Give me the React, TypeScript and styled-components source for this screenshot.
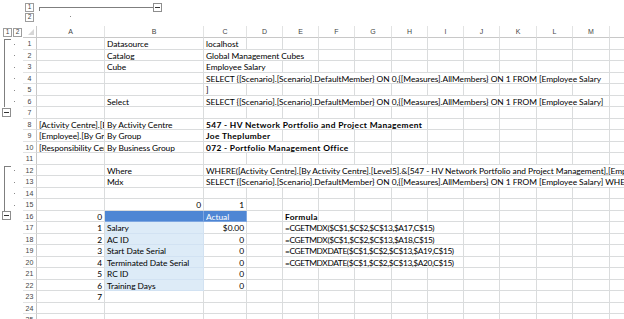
import React from "react";
import styled, { createGlobalStyle } from "styled-components";

const GlobalStyle = createGlobalStyle`
  html, body {
    margin: 0;
    padding: 0;
    background: #ffffff;
    overflow: hidden;
  }
  body {
    font-family: Lato, "Liberation Sans", sans-serif;
  }
`;

const COL_WIDTHS = [68, 99, 43, 36, 36, 36, 37, 36, 36, 36, 37, 36, 37, 40];
const LETTERS = "ABCDEFGHIJKLMN".split("");
const TEMPLATE = `23px 14px ${COL_WIDTHS.map((w) => `${w}px`).join(" ")}`;

const GRID = "#dadcdd";
const LINE = "#7f7f7f";

type Fill = "none" | "head" | "band";

type CellDef = {
  col: number;
  text?: string;
  span?: number;
  right?: boolean;
  bold?: boolean;
  tight?: boolean;
  fill?: Fill;
};

type Outline = "none" | "start" | "mid" | "minus";

const SELECT =
  "SELECT {[Scenario].[Scenario].DefaultMember} ON 0,{[Measures].AllMembers} ON 1 FROM [Employee Salary]";

const DATA: Record<number, CellDef[]> = {
  1: [
    { col: 1, text: "Datasource" },
    { col: 2, text: "localhost" },
  ],
  2: [
    { col: 1, text: "Catalog" },
    { col: 2, text: "Global Management Cubes", span: 3 },
  ],
  3: [
    { col: 1, text: "Cube" },
    { col: 2, text: "Employee Salary", span: 2 },
  ],
  4: [{ col: 2, text: SELECT.slice(0, -1), span: 11 }],
  5: [{ col: 2, text: "]" }],
  6: [
    { col: 1, text: "Select" },
    { col: 2, text: SELECT, span: 11 },
  ],
  8: [
    { col: 0, text: "[Activity Centre].[By Activity Centre].[Level5]" },
    { col: 1, text: "By Activity Centre" },
    { col: 2, text: "547 - HV Network Portfolio and Project Management", span: 6, bold: true },
  ],
  9: [
    { col: 0, text: "[Employee].[By Group]" },
    { col: 1, text: "By Group" },
    { col: 2, text: "Joe Theplumber", span: 2, bold: true },
  ],
  10: [
    { col: 0, text: "[Responsibility Centre].[By Business Group]" },
    { col: 1, text: "By Business Group" },
    { col: 2, text: "072 - Portfolio Management Office", span: 4, bold: true },
  ],
  12: [
    { col: 1, text: "Where" },
    {
      col: 2,
      text: "WHERE([Activity Centre].[By Activity Centre].[Level5].&[547 - HV Network Portfolio and Project Management],[Employee].[By Group].&[Joe Theplumber])",
      span: 12,
    },
  ],
  13: [
    { col: 1, text: "Mdx" },
    {
      col: 2,
      text: `${SELECT} WHERE([Activity Centre].[By Activity Centre].[Level5].&[547 - HV Network Portfolio and Project Management])`,
      span: 12,
    },
  ],
  15: [
    { col: 1, text: "0", right: true },
    { col: 2, text: "1", right: true },
  ],
  16: [
    { col: 0, text: "0", right: true },
    { col: 1, fill: "head" },
    { col: 2, text: "Actual", fill: "head" },
    { col: 4, text: "Formula", bold: true },
  ],
};

const MEASURES = ["Salary", "AC ID", "Start Date Serial", "Terminated Date Serial", "RC ID", "Training Days"];

MEASURES.forEach((name, i) => {
  const row = 17 + i;
  const cells: CellDef[] = [
    { col: 0, text: String(i + 1), right: true },
    { col: 1, text: name, fill: "band" },
    { col: 2, text: i === 0 ? "$0.00" : "0", right: true },
  ];
  if (i < 4) {
    const fn = i < 2 ? "CGETMDX" : "CGETMDXDATE";
    cells.push({
      col: 4,
      text: `=${fn}($C$1,$C$2,$C$13,$A${row},C$15)`,
      span: 5,
      tight: true,
    });
  }
  DATA[row] = cells;
});
DATA[23] = [{ col: 0, text: "7", right: true }];

const outlineFor = (row: number): Outline => {
  if (row === 1 || row === 12) return "start";
  if ((row > 1 && row <= 6) || (row > 12 && row <= 15)) return "mid";
  if (row === 7 || row === 16) return "minus";
  return "none";
};

const Sheet = styled.div`
  display: flex;
  flex-direction: column;
  width: 660px;
`;

const Band = styled.div<{ $h: number }>`
  display: grid;
  grid-template-columns: ${TEMPLATE};
  height: ${(p) => p.$h}px;
`;

/* ---- outline controls ---- */

const LevelButton = styled.span`
  display: flex;
  align-items: center;
  justify-content: center;
  width: 9px;
  height: 9px;
  box-sizing: border-box;
  border: 1px solid #9d9d9d;
  background: #fff;
  color: #444;
  font-family: "Liberation Sans", sans-serif;
  font-size: 6.5px;
  line-height: 1;
`;

const MinusBox = styled.span`
  display: flex;
  align-items: center;
  justify-content: center;
  width: 9px;
  height: 9px;
  box-sizing: border-box;
  border: 1px solid #8e8e8e;
  background: #fff;

  &::after {
    content: "";
    width: 5px;
    height: 1px;
    background: #333;
  }
`;

const ColLevels = styled.div`
  grid-column: 2;
  display: flex;
  flex-direction: column;
  gap: 1px;
  padding: 3px 0 0 2px;
`;

const ColGroup = styled.div`
  grid-column: 3 / span 2;
  display: flex;
  flex-direction: column;
  padding: 3px 0 0 2px;
`;

const GroupBar = styled.div`
  display: flex;
  align-items: flex-start;
`;

const GroupLine = styled.span`
  width: 113px;
  height: 3px;
  margin-top: 4px;
  border-top: 1px solid ${LINE};
  border-left: 1px solid ${LINE};
`;

const ColDot = styled.span<{ $offset: number }>`
  width: 1px;
  height: 1px;
  margin: 4px 0 0 ${(p) => p.$offset}px;
  background: #8a8a8a;
`;

const RowLevels = styled.div`
  grid-column: 1;
  display: flex;
  align-items: center;
  gap: 1px;
  padding-left: 3px;
`;

const Gutter = styled.div`
  display: grid;
  grid-template-columns: 2px 9px 3px 1fr;
  align-items: center;
`;

const Bracket = styled.span<{ $start: boolean }>`
  grid-column: 2;
  align-self: stretch;
  margin-left: 2px;
  border-left: 1px solid ${LINE};
  ${(p) => (p.$start ? `border-top: 1px solid ${LINE}; margin-top: 1px;` : "")}
`;

const GutterMinus = styled(MinusBox)`
  grid-column: 2;
  margin-top: -2px;
`;

const RowDot = styled.span`
  grid-column: 4;
  width: 1px;
  height: 1px;
  background: #8a8a8a;
`;

/* ---- headers ---- */

const Corner = styled.div`
  grid-column: 2;
  display: flex;
  align-items: flex-end;
  justify-content: flex-end;
  padding: 0 2px 2px 0;
  border-right: 1px solid #c8c8c8;
  border-bottom: 1px solid #c8c8c8;
`;

const ColHead = styled.div`
  display: flex;
  align-items: center;
  justify-content: center;
  border-right: 1px solid #e2e3e3;
  border-bottom: 1px solid #c8c8c8;
  color: #444;
  font-family: "Liberation Sans", sans-serif;
  font-size: 7px;
`;

const RowHead = styled.div`
  display: flex;
  align-items: center;
  justify-content: center;
  border-right: 1px solid #c8c8c8;
  border-bottom: 1px solid #e2e3e3;
  color: #444;
  font-family: "Liberation Sans", sans-serif;
  font-size: 7px;
`;

/* ---- cells ---- */

const FILLS: Record<Fill, { bg: string; fg: string; line: string }> = {
  none: { bg: "#ffffff", fg: "#000000", line: GRID },
  head: { bg: "#4e86d4", fg: "#ffffff", line: "#7ea6e0" },
  band: { bg: "#ddebf7", fg: "#000000", line: "#d2e2f2" },
};

const Cell = styled.div<{ $span: number; $right: boolean; $bold: boolean; $tight: boolean; $fill: Fill }>`
  grid-column: span ${(p) => p.$span};
  display: flex;
  align-items: center;
  justify-content: ${(p) => (p.$right ? "flex-end" : "flex-start")};
  padding: 1px 2px 0 2px;
  box-sizing: border-box;
  min-width: 0;
  overflow: hidden;
  white-space: nowrap;
  background: ${(p) => FILLS[p.$fill].bg};
  color: ${(p) => FILLS[p.$fill].fg};
  border-right: 1px solid ${(p) => FILLS[p.$fill].line};
  border-bottom: 1px solid ${(p) => FILLS[p.$fill].line};
  font-size: 8.4px;
  font-weight: ${(p) => (p.$bold ? 700 : 400)};
  letter-spacing: ${(p) => (p.$bold ? "0.35px" : p.$tight ? "-0.4px" : "-0.05px")};
`;

const RowGutter = ({ kind }: { kind: Outline }) => (
  <Gutter>
    {(kind === "start" || kind === "mid") && (
      <>
        <Bracket $start={kind === "start"} />
        <RowDot />
      </>
    )}
    {kind === "minus" && <GutterMinus />}
  </Gutter>
);

const SheetRow = ({ row }: { row: number }) => {
  const defs = DATA[row] || [];
  const cells: React.ReactNode[] = [];
  let col = 0;
  while (col < LETTERS.length) {
    const def = defs.find((d) => d.col === col);
    const span = def?.span ?? 1;
    cells.push(
      <Cell
        key={col}
        $span={span}
        $right={!!def?.right}
        $bold={!!def?.bold}
        $tight={!!def?.tight}
        $fill={def?.fill ?? "none"}
      >
        {def?.text}
      </Cell>
    );
    col += span;
  }
  return (
    <Band $h={row % 2 === 1 ? 12 : 11}>
      <RowGutter kind={outlineFor(row)} />
      <RowHead>{row}</RowHead>
      {cells}
    </Band>
  );
};

const ROWS = Array.from({ length: 25 }, (_, i) => i + 1);

export default function App() {
  return (
    <>
      <GlobalStyle />
      <Sheet>
        <Band $h={26}>
          <ColLevels>
            <LevelButton>1</LevelButton>
            <LevelButton>2</LevelButton>
          </ColLevels>
          <ColGroup>
            <GroupBar>
              <GroupLine />
              <MinusBox />
            </GroupBar>
            <ColDot $offset={COL_WIDTHS[0] / 2 - 3} />
          </ColGroup>
        </Band>
        <Band $h={12}>
          <RowLevels>
            <LevelButton>1</LevelButton>
            <LevelButton>2</LevelButton>
          </RowLevels>
          <Corner>
            <svg width="6" height="6" viewBox="0 0 6 6">
              <path d="M6 0 L6 6 L0 6 Z" fill="#d6d6d6" />
            </svg>
          </Corner>
          {LETTERS.map((l) => (
            <ColHead key={l}>{l}</ColHead>
          ))}
        </Band>
        {ROWS.map((r) => (
          <SheetRow key={r} row={r} />
        ))}
      </Sheet>
    </>
  );
}
